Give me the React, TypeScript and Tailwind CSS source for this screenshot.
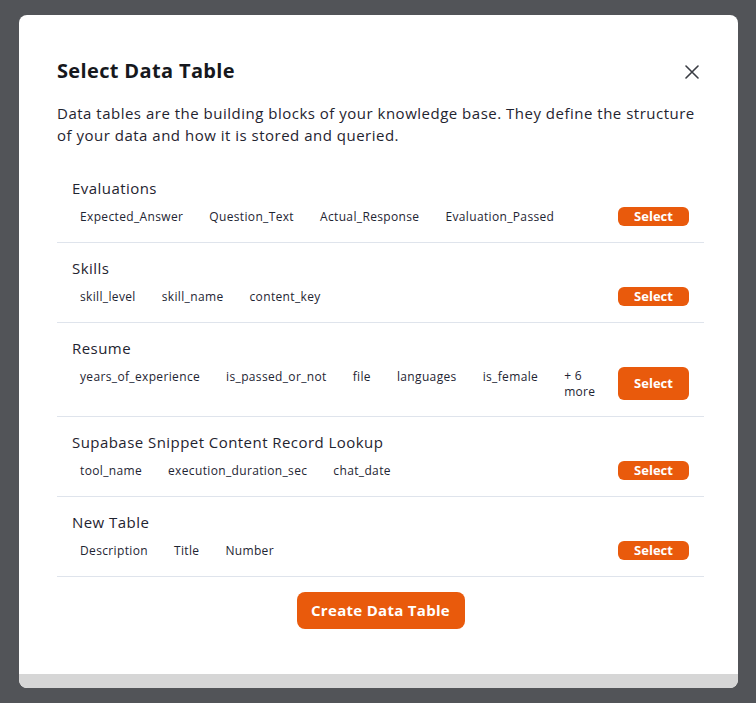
type DataTable = {
  name: string;
  fields: string[];
  extra?: number;
};

const tables: DataTable[] = [
  {
    name: "Evaluations",
    fields: ["Expected_Answer", "Question_Text", "Actual_Response", "Evaluation_Passed"],
  },
  { name: "Skills", fields: ["skill_level", "skill_name", "content_key"] },
  {
    name: "Resume",
    fields: ["years_of_experience", "is_passed_or_not", "file", "languages", "is_female"],
    extra: 6,
  },
  {
    name: "Supabase Snippet Content Record Lookup",
    fields: ["tool_name", "execution_duration_sec", "chat_date"],
  },
  { name: "New Table", fields: ["Description", "Title", "Number"] },
];

const TableRow = ({ table }: { table: DataTable }) => (
  <li className="border-b border-[#dfe4ec] px-[15px] pt-[14px] pb-4">
    <p className="text-[15px] leading-[22px] tracking-[0.45px] text-[#1f2430]">
      {table.name}
    </p>
    <div className="mt-2 flex items-stretch gap-2.5">
      <div className="flex flex-1 items-start gap-2.5">
        {table.fields.map((field) => (
          <span
            key={field}
            className="whitespace-nowrap px-2 text-[12px] font-medium leading-[19px] tracking-[0.35px] text-[#1e2533]"
          >
            {field}
          </span>
        ))}
        {table.extra && (
          <span className="px-2 pt-px text-[12px] font-medium leading-4 tracking-[0.3px] text-[#1e2533]">
            + {table.extra}
            <br />
            more
          </span>
        )}
      </div>
      <button className="flex w-[71px] items-center justify-center rounded-md bg-[#e95a0c] py-px text-[13px] font-bold leading-[17px] text-white">
        Select
      </button>
    </div>
  </li>
);

export default function App() {
  return (
    <div
      className="min-h-screen bg-[#525458] px-[19px] pt-[15px] pb-[15px]"
      style={{ fontFamily: '"Open Sans", "Noto Sans", sans-serif' }}
    >
      <div className="flex w-[719px] flex-col overflow-hidden rounded-lg bg-white">
        <div className="pl-[38px] pr-[34px] pt-[42px] pb-[45px]">
          <div className="flex items-center justify-between">
            <h2 className="text-[20px] font-bold leading-7 tracking-[0.35px] text-[#16181d]">
              Select Data Table
            </h2>
            <button className="mr-[5px] mt-[2px] text-[#3a3d44]">
              <svg width="14" height="14" viewBox="0 0 14 14" fill="none">
                <path
                  d="M1 1L13 13M13 1L1 13"
                  stroke="currentColor"
                  strokeWidth="1.6"
                  strokeLinecap="round"
                />
              </svg>
            </button>
          </div>
          <p className="mt-[17px] text-[15px] leading-[22px] tracking-[0.5px] text-[#1f2430]">
            Data tables are the building blocks of your knowledge base. They define the
            structure of your data and how it is stored and queried.
          </p>
          <ul className="mt-[17px]">
            {tables.map((t) => (
              <TableRow key={t.name} table={t} />
            ))}
          </ul>
          <div className="mt-[15px] flex justify-center">
            <button className="h-[37px] w-[168px] rounded-lg bg-[#e95a0c] text-[15px] font-bold tracking-[0.3px] text-white">
              Create Data Table
            </button>
          </div>
        </div>
        <div className="h-[14px] rounded-b-lg bg-[#d6d6d6]" />
      </div>
    </div>
  );
}
